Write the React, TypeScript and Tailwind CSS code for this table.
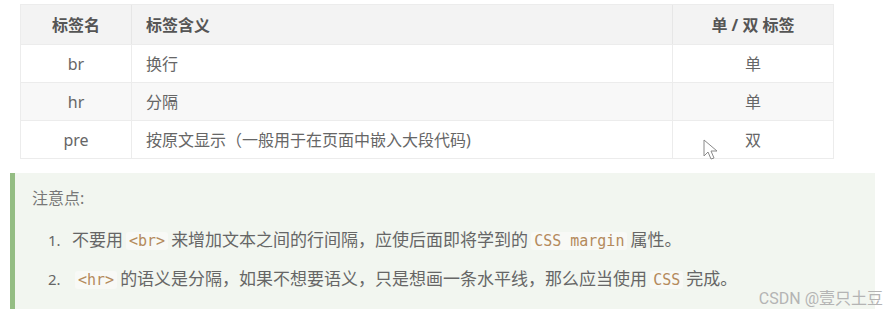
import React from "react";

const ROWS = [
  { name: "br", meaning: "换行", kind: "单", striped: false },
  { name: "hr", meaning: "分隔", kind: "单", striped: true },
  { name: "pre", meaning: "按原文显示（一般用于在页面中嵌入大段代码)", kind: "双", striped: false },
];

const FONT = "font-['Noto_Sans','Noto_Sans_CJK_SC',sans-serif]";

function Code({ children }: { children: React.ReactNode }) {
  return (
    <code className="mx-[3px] rounded-[3px] bg-[#f8f9f6] px-[3px] font-['DejaVu_Sans_Mono','Noto_Sans_CJK_SC',monospace] text-[15px] text-[#b48a5c]">
      {children}
    </code>
  );
}

function Cursor() {
  return (
    <svg className="absolute left-[703px] top-[139px]" width="16" height="22" viewBox="0 0 16 22">
      <path d="M1 1 L1 17 L5 13 L8 20 L11 19 L8 12 L14 12 Z" fill="#fff" stroke="#8a8a8a" strokeWidth="1" strokeLinejoin="round" />
    </svg>
  );
}

export default function App() {
  return (
    <div className={`relative h-[317px] w-[885px] overflow-hidden bg-white ${FONT}`}>
      {/* Table */}
      <div className="pl-[20px] pt-[4px]">
        <div className="w-[814px] border border-[#ececec]">
          <div className="flex h-[39px] items-center bg-[#f3f3f3] text-[16px] font-bold text-[#555]">
            <div className="flex h-full w-[111px] items-center justify-center border-r border-[#e6e6e6]">标签名</div>
            <div className="flex h-full flex-1 items-center border-r border-[#e6e6e6] pl-[14px]">标签含义</div>
            <div className="flex h-full w-[160px] items-center justify-center">单 / 双 标签</div>
          </div>
          {ROWS.map((r) => (
            <div
              key={r.name}
              className={`flex h-[38px] items-center border-t border-[#ececec] text-[16px] text-[#666] ${r.striped ? "bg-[#f8f8f8]" : "bg-white"}`}
            >
              <div className="flex h-full w-[111px] items-center justify-center border-r border-[#ececec]">{r.name}</div>
              <div className="flex h-full flex-1 items-center border-r border-[#ececec] pl-[14px]">{r.meaning}</div>
              <div className="flex h-full w-[160px] items-center justify-center">{r.kind}</div>
            </div>
          ))}
        </div>
      </div>

      {/* Note */}
      <div className="ml-[10px] mt-[14px] h-[136px] w-[865px] border-l-[5px] border-[#94bd83] bg-[#f2f6f0] pl-[17px] pt-[12px]">
        <p className="text-[16px] leading-[26px] text-[#777]">注意点:</p>
        <ol className="mt-[16px] space-y-[12px] pl-[16px] text-[17px] leading-[26px] text-[#666]">
          <li className="flex">
            <span className="w-[24px] text-[15px]">1.</span>
            <span>
              不要用<Code>&lt;br&gt;</Code>来增加文本之间的行间隔，应使后面即将学到的<Code>CSS margin</Code>属性。
            </span>
          </li>
          <li className="flex">
            <span className="w-[24px] text-[15px]">2.</span>
            <span>
              <Code>&lt;hr&gt;</Code>的语义是分隔，如果不想要语义，只是想画一条水平线，那么应当使用<Code>CSS</Code>完成。
            </span>
          </li>
        </ol>
      </div>

      <div className="absolute bottom-[6px] right-[2px] font-['Roboto','Noto_Sans_CJK_SC',sans-serif] text-[16px] text-[#b4b4b4]">
        CSDN @壹只土豆
      </div>

      <Cursor />
    </div>
  );
}
